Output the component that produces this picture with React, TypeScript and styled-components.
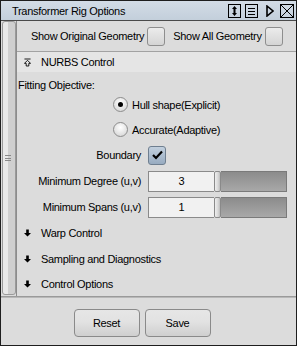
import React from "react";
import styled, { createGlobalStyle } from "styled-components";

const Global = createGlobalStyle`
  html, body { margin: 0; padding: 0; background: #dcdcdc; }
  * { box-sizing: border-box; }
  body {
    font-family: "Liberation Sans", Arial, sans-serif;
    font-size: 11px;
    letter-spacing: -0.3px;
    color: #000;
  }
`;

const Window = styled.div`
  width: 297px;
  height: 346px;
  border: 1px solid #1e1e1e;
  background: #dcdcdc;
  display: flex;
  flex-direction: column;
  overflow: hidden;
`;

const TitleBar = styled.div`
  height: 20px;
  flex: none;
  background: linear-gradient(#d3dce6, #c3cfdb);
  border-bottom: 1px solid #4a4a4a;
  display: flex;
  align-items: center;
  padding-left: 11px;
  padding-right: 2px;
  white-space: nowrap;
`;

const Title = styled.div`
  flex: 1;
`;

const TitleIcon = styled.span<{ $ml: number }>`
  display: flex;
  margin-left: ${(p) => p.$ml}px;
`;

const Body = styled.div`
  flex: 1;
  display: flex;
  min-height: 0;
`;

const SideStrip = styled.div`
  width: 16px;
  flex: none;
  padding: 0 0 1px 1px;
  border-right: 1px solid #8c8c8c;
  display: flex;
`;

const Handle = styled.div`
  flex: 1;
  border: 1px solid #9a9a9a;
  border-radius: 3px;
  background: linear-gradient(90deg, #e8e8e8 0 45%, #cfcfcf 45% 100%);
  display: flex;
  align-items: center;
  justify-content: center;
`;

const Grip = styled.div`
  width: 6px;
  height: 6px;
  border-top: 1px solid #888;
  border-bottom: 1px solid #888;
  position: relative;
  margin-left: -2px;
  &::after {
    content: "";
    position: absolute;
    left: 0;
    right: 0;
    top: 1.5px;
    border-top: 1px solid #888;
  }
`;

const Content = styled.div`
  flex: 1;
  display: flex;
  flex-direction: column;
  white-space: nowrap;
  min-width: 0;
`;

const TopRow = styled.div`
  height: 31px;
  flex: none;
  display: flex;
  align-items: center;
  padding-left: 14px;
  border-bottom: 1px solid #a2a2a2;
`;

const TopLabel = styled.span`
  margin-right: 3px;
`;

const Check = styled.div<{ $checked?: boolean; $gap?: number }>`
  width: 18px;
  height: 19px;
  border: 1px solid ${(p) => (p.$checked ? "#6f7f90" : "#8e8e8e")};
  border-radius: 3px;
  background: ${(p) =>
    p.$checked
      ? "linear-gradient(#c2d0de, #98abc0)"
      : "linear-gradient(#ececec, #d4d4d4)"};
  margin-right: ${(p) => p.$gap ?? 0}px;
  display: flex;
  align-items: center;
  justify-content: center;
  flex: none;
`;

const SectionHeader = styled.div<{ $open?: boolean; $h?: number }>`
  height: ${(p) => p.$h ?? 26}px;
  flex: none;
  display: flex;
  align-items: center;
  padding-left: 7px;
  background: ${(p) => (p.$open ? "#e5e5e5" : "transparent")};
  gap: 10px;
`;

const ArrowBox = styled.span`
  width: 7px;
  display: flex;
  justify-content: center;
`;

const LabelRow = styled.div`
  height: 20px;
  flex: none;
  display: flex;
  align-items: center;
  padding-top: 5px;
  padding-left: 1px;
`;

const RadioRow = styled.div`
  height: 25px;
  flex: none;
  display: flex;
  align-items: center;
  padding-left: 96px;
  gap: 4px;
`;

const Radio = styled.div<{ $on?: boolean }>`
  width: 15px;
  height: 15px;
  border-radius: 50%;
  border: 1px solid #8c8c8c;
  background: radial-gradient(circle at 50% 35%, #ffffff, #d0d0d0);
  display: flex;
  align-items: center;
  justify-content: center;
  &::after {
    content: "";
    display: ${(p) => (p.$on ? "block" : "none")};
    width: 5px;
    height: 5px;
    border-radius: 50%;
    background: #000;
  }
`;

const FormRow = styled.div<{ $h: number }>`
  height: ${(p) => p.$h}px;
  flex: none;
  display: flex;
  align-items: center;
`;

const FormLabel = styled.div`
  width: 131px;
  text-align: right;
  padding-right: 7px;
`;

const SliderField = styled.div`
  display: flex;
  height: 21px;
  width: 139px;
`;

const NumberBox = styled.div`
  width: 66px;
  border: 1px solid #8a8a8a;
  border-right: none;
  background: #f1f1f1;
  display: flex;
  align-items: center;
  justify-content: center;
`;

const Thumb = styled.div`
  width: 7px;
  border: 1px solid #8a8a8a;
  border-radius: 2px;
  background: linear-gradient(90deg, #eeeeee, #d8d8d8 60%, #bcbcbc);
`;

const Track = styled.div`
  flex: 1;
  border: 1px solid #7a7a7a;
  border-left: none;
  background: linear-gradient(#8c8c8c, #a8a8a8);
`;

const Divider = styled.div`
  height: 2px;
  flex: none;
  border-top: 1px solid #9a9a9a;
  border-bottom: 1px solid #b8b8b8;
`;

const Footer = styled.div`
  flex: none;
  height: 47px;
  display: flex;
  justify-content: center;
  align-items: flex-start;
  padding-top: 11px;
  gap: 5px;
  padding-right: 13px;
`;

const Button = styled.button`
  width: 66px;
  height: 28px;
  border: 1px solid #8a8a8a;
  border-radius: 4px;
  background: linear-gradient(#e6e6e6 0%, #e2e2e2 45%, #cfcfcf 100%);
  font-family: inherit;
  font-size: 11px;
  letter-spacing: inherit;
  color: #000;
  padding: 0;
`;

const DownArrow = () => (
  <svg width="8" height="8" viewBox="0 0 8 8">
    <path d="M2.5 0 H5.5 V4 H8 L4 8 L0 4 H2.5 Z" fill="#000" />
  </svg>
);

const UpBarArrow = () => (
  <svg width="8" height="9" viewBox="0 0 8 9">
    <path d="M0.5 0.5 H7.5" stroke="#000" strokeWidth="1" />
    <path d="M4 2 L7.5 5.5 H5.5 V8.5 H2.5 V5.5 H0.5 Z" fill="none" stroke="#000" strokeWidth="1" />
  </svg>
);

const CheckMark = () => (
  <svg width="11" height="10" viewBox="0 0 11 10">
    <path d="M1 5 L4 8 L10 1.5" fill="none" stroke="#000" strokeWidth="2.2" />
  </svg>
);

const IconBoxArrows = () => (
  <svg width="13" height="14" viewBox="0 0 13 14">
    <rect x="0.5" y="0.5" width="12" height="13" fill="none" stroke="#000" />
    <path d="M6.5 2 L9 5 H4 Z M6.5 12 L9 9 H4 Z" fill="#000" />
    <rect x="5.5" y="4" width="2" height="6" fill="#000" />
  </svg>
);

const IconBoxLines = () => (
  <svg width="13" height="14" viewBox="0 0 13 14">
    <rect x="0.5" y="0.5" width="12" height="13" fill="none" stroke="#000" />
    <path d="M3 4.5 H10 M3 7.5 H10 M3 10.5 H10" stroke="#000" />
  </svg>
);

const IconPlay = () => (
  <svg width="8" height="12" viewBox="0 0 8 12">
    <path d="M1 1 L7 6 L1 11 Z" fill="none" stroke="#000" strokeWidth="1.6" />
  </svg>
);

const IconClose = () => (
  <svg width="14" height="14" viewBox="0 0 14 14">
    <rect x="0.5" y="0.5" width="13" height="13" fill="none" stroke="#000" />
    <path d="M1 1 L13 13 M13 1 L1 13" stroke="#000" />
  </svg>
);

const collapsed = [
  { t: "Warp Control", h: 26 },
  { t: "Sampling and Diagnostics", h: 26 },
  { t: "Control Options", h: 24 },
];

export default function App() {
  return (
    <>
      <Global />
      <Window>
        <TitleBar>
          <Title>Transformer Rig Options</Title>
          <TitleIcon $ml={0}>
            <IconBoxArrows />
          </TitleIcon>
          <TitleIcon $ml={4}>
            <IconBoxLines />
          </TitleIcon>
          <TitleIcon $ml={8}>
            <IconPlay />
          </TitleIcon>
          <TitleIcon $ml={6}>
            <IconClose />
          </TitleIcon>
        </TitleBar>
        <Body>
          <SideStrip>
            <Handle>
              <Grip />
            </Handle>
          </SideStrip>
          <Content>
            <TopRow>
              <TopLabel>Show Original Geometry</TopLabel>
              <Check $gap={8} />
              <TopLabel>Show All Geometry</TopLabel>
              <Check />
            </TopRow>
            <SectionHeader $open $h={20}>
              <ArrowBox>
                <UpBarArrow />
              </ArrowBox>
              NURBS Control
            </SectionHeader>
            <LabelRow>Fitting Objective:</LabelRow>
            <RadioRow>
              <Radio $on />
              Hull shape(Explicit)
            </RadioRow>
            <RadioRow>
              <Radio />
              Accurate(Adaptive)
            </RadioRow>
            <FormRow $h={26}>
              <FormLabel>Boundary</FormLabel>
              <Check $checked>
                <CheckMark />
              </Check>
            </FormRow>
            <FormRow $h={26}>
              <FormLabel>Minimum Degree (u,v)</FormLabel>
              <SliderField>
                <NumberBox>3</NumberBox>
                <Thumb />
                <Track />
              </SliderField>
            </FormRow>
            <FormRow $h={26}>
              <FormLabel>Minimum Spans (u,v)</FormLabel>
              <SliderField>
                <NumberBox>1</NumberBox>
                <Thumb />
                <Track />
              </SliderField>
            </FormRow>
            {collapsed.map((c) => (
              <SectionHeader key={c.t} $h={c.h}>
                <ArrowBox>
                  <DownArrow />
                </ArrowBox>
                {c.t}
              </SectionHeader>
            ))}
          </Content>
        </Body>
        <Divider />
        <Footer>
          <Button>Reset</Button>
          <Button>Save</Button>
        </Footer>
      </Window>
    </>
  );
}
